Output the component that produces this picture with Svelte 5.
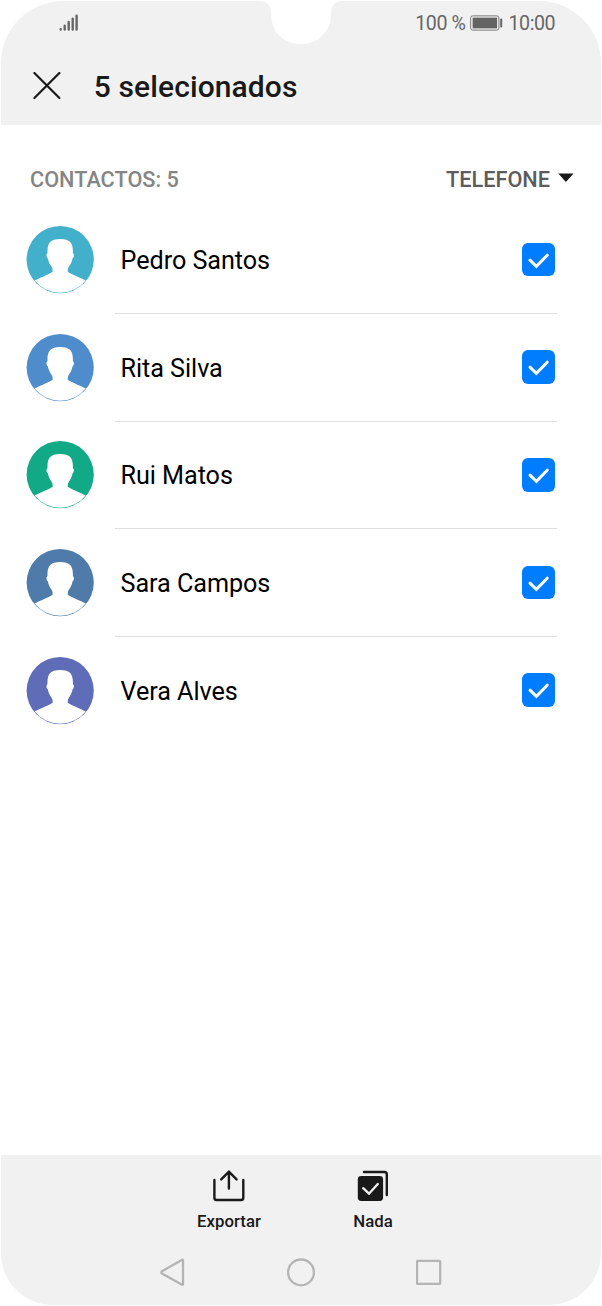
<script>
  let contacts = [
    { name: "Pedro Santos", color: "#42afcb", selected: true },
    { name: "Rita Silva", color: "#4f8ccb", selected: true },
    { name: "Rui Matos", color: "#12a987", selected: true },
    { name: "Sara Campos", color: "#4f7bab", selected: true },
    { name: "Vera Alves", color: "#5f6cb7", selected: true },
  ];

  $: count = contacts.filter((c) => c.selected).length;

  function toggle(contact) {
    contact.selected = !contact.selected;
    contacts = contacts;
  }
</script>

<div class="phone">
  <header>
    <svg class="notch" width="84" height="45" viewBox="0 0 84 45">
      <path d="M0 0V1C8 1 12 5 12 13C12 31 24 44 42 44S72 31 72 13C72 5 76 1 84 1V0Z" fill="#fff" />
    </svg>
    <div class="status">
      <svg width="20" height="18" viewBox="0 0 20 18" stroke="#666" stroke-width="2.4" stroke-linecap="round">
        <path d="M2.7 15.1V15.5M6.7 11.7V15.5M10.7 8V15.5M14.7 4.7V15.5M18.6 1.6V15.5" />
      </svg>
      <div class="status-right">
        <span class="percent">100 %</span>
        <svg width="33" height="16" viewBox="0 0 33 16">
          <rect x="0.7" y="0.9" width="28.2" height="14.2" rx="2" fill="#f8f8f8" stroke="#777" stroke-width="1" />
          <rect x="2.6" y="2.6" width="24.5" height="10.8" fill="#636363" />
          <rect x="30.2" y="3.5" width="2" height="9" rx="0.8" fill="#666" />
        </svg>
        <span class="time">10:00</span>
      </div>
    </div>
    <div class="title">
      <svg width="28" height="28" viewBox="0 0 28 28" stroke="#191919" stroke-width="2.2" stroke-linecap="round">
        <path d="M1.4 1L26.4 26M26.4 1L1.4 26" />
      </svg>
      <h1>{count} selecionados</h1>
    </div>
  </header>

  <main>
    <div class="subheader">
      <span class="total">CONTACTOS: {contacts.length}</span>
      <span class="storage">TELEFONE</span>
      <svg width="16" height="10" viewBox="0 0 16 10">
        <path d="M0.3 0.5H15.5L8.6 8.3Q7.9 9.1 7.2 8.3Z" fill="#191919" />
      </svg>
    </div>
    <ul>
      {#each contacts as contact}
        <li>
          <svg class="avatar" width="68" height="68" viewBox="0 0 68 68">
            <circle cx="34.2" cy="33.6" r="33.6" fill={contact.color} />
            <path
              d="M26.6 45.8C26.8 44 26.6 42.4 25.6 40.8C23.6 37.8 22.4 35.5 21.8 32.2C20.2 31.2 20 28 21.5 27.2C21.2 17 24 13 34.2 13S47.2 17 46.9 27.2C48.4 28 48.2 31.2 46.6 32.2C46 35.5 44.8 37.8 42.8 40.8C41.8 42.4 41.6 44 41.8 45.8C45.5 48.6 53 51 59.8 54.6A33 32.9 0 0 1 8.6 54.6C15.4 51 22.9 48.6 26.6 45.8Z"
              fill="#fff"
            />
          </svg>
          <div class="content">
            <span class="name">{contact.name}</span>
            <button
              class:selected={contact.selected}
              aria-label={contact.name}
              on:click={() => toggle(contact)}
            >
              <svg width="34" height="34" viewBox="0 0 34 34">
                <path d="M8 17.2L14.4 23.3L25.2 12.2" fill="none" stroke="#fff" stroke-width="3" stroke-linecap="round" />
              </svg>
            </button>
          </div>
        </li>
      {/each}
    </ul>
  </main>

  <footer>
    <div class="actions">
      <div class="action">
        <svg width="32" height="32" viewBox="0 0 32 32" fill="none" stroke="#191919" stroke-width="2.4" stroke-linecap="round">
          <path d="M1.4 9.9V27.7Q1.4 30 3.7 30H28Q30.3 30 30.3 27.7V9.9M15.9 18.5V2M8.2 9.4L15.9 1.7L23.6 9.4" />
        </svg>
        <span>Exportar</span>
      </div>
      <div class="action">
        <svg width="32" height="32" viewBox="0 0 32 32" fill="none" stroke-linecap="round">
          <rect x="0.8" y="6" width="25.3" height="25" rx="3.4" fill="#191919" />
          <path d="M6.2 18.2L12 23.7L20.8 14" stroke="#f1f1f1" stroke-width="2.3" />
          <path d="M7 2H27.3Q29.8 2 29.8 4.5V25" stroke="#191919" stroke-width="2.4" />
        </svg>
        <span>Nada</span>
      </div>
    </div>
    <nav>
      <svg width="26" height="30" viewBox="0 0 26 30">
        <path d="M23 2.4V26.9Q23 28.4 21.7 27.6L2 16.5Q0.5 15.3 2 14.2L21.7 3Q23 2.3 23 3.8Z" />
      </svg>
      <svg width="30" height="30" viewBox="0 0 30 30">
        <circle cx="15" cy="15.4" r="12.9" />
      </svg>
      <svg width="26" height="30" viewBox="0 0 26 30">
        <rect x="1" y="3.8" width="23.2" height="23" rx="0.8" />
      </svg>
    </nav>
  </footer>
</div>

<style>
  :global(body) {
    background: #fff;
  }

  .phone {
    display: flex;
    flex-direction: column;
    width: 602px;
    height: 1306px;
    font-family: Roboto, sans-serif;
    color: #191919;
  }

  svg {
    display: block;
    flex: none;
  }

  header {
    position: relative;
    box-sizing: border-box;
    height: 124.8px;
    margin: 0.6px 0.8px 0;
    border-radius: 62px 62px 0 0;
    background: #f1f1f1;
  }

  /* camera cutout lies over the status bar */
  .notch {
    position: absolute;
    top: -0.6px;
    left: 258px;
  }

  .status {
    display: flex;
    justify-content: space-between;
    align-items: center;
    height: 45px;
    padding: 0 46px 0 57px;
  }

  .status-right {
    display: flex;
    align-items: center;
    font-size: 19.6px;
    color: #666;
    letter-spacing: -0.4px;
  }

  .percent {
    margin-right: 5px;
  }

  .time {
    margin-left: 5px;
  }

  .title {
    display: flex;
    align-items: center;
    height: 80px;
    padding: 0 32px;
  }

  h1 {
    margin: 2px 0 0 33px;
    font-size: 30px;
    font-weight: 500;
    letter-spacing: 0.1px;
  }

  main {
    flex: 1;
  }

  .subheader {
    display: flex;
    align-items: center;
    box-sizing: border-box;
    height: 80.8px;
    padding: 27px 28px 0 30px;
    font-size: 21.7px;
    font-weight: 500;
  }

  .total {
    flex: 1;
    color: #858585;
  }

  .storage {
    margin-right: 8px;
    color: #5c5c5c;
  }

  .subheader svg {
    margin-bottom: 3px;
  }

  ul {
    margin: 0;
    padding: 0 45px 0 26px;
    list-style: none;
  }

  li {
    display: flex;
    align-items: center;
    height: 107.7px;
  }

  .content {
    display: flex;
    flex: 1;
    justify-content: space-between;
    align-items: center;
    box-sizing: border-box;
    height: 100%;
    margin-left: 21px;
    padding: 0 1.8px 0 5.5px;
    border-bottom: 1px solid #dfdfdf;
  }

  li:last-child .content {
    border-color: transparent;
  }

  .name {
    padding-top: 2px;
    font-size: 25.2px;
    color: #000;
    letter-spacing: -0.05px;
  }

  button {
    width: 33.6px;
    height: 33.6px;
    padding: 0;
    border: 1px solid #999;
    border-radius: 6px;
    background: #fff;
  }

  button.selected {
    border: none;
    background: #007dff;
  }

  footer {
    box-sizing: border-box;
    height: 150px;
    margin: 0 0.8px 1px;
    border-radius: 0 0 52px 52px;
    background: #f1f1f1;
  }

  .actions {
    display: flex;
    justify-content: center;
    padding-top: 15px;
  }

  .action {
    display: flex;
    flex-direction: column;
    align-items: center;
    gap: 9px;
    width: 144px;
    font-size: 16.8px;
    font-weight: 500;
  }

  nav {
    display: flex;
    justify-content: space-between;
    width: 282px;
    margin: 26px 0 0 159px;
  }

  nav svg {
    fill: none;
    stroke: #b4b4b4;
    stroke-width: 2.3;
  }
</style>
